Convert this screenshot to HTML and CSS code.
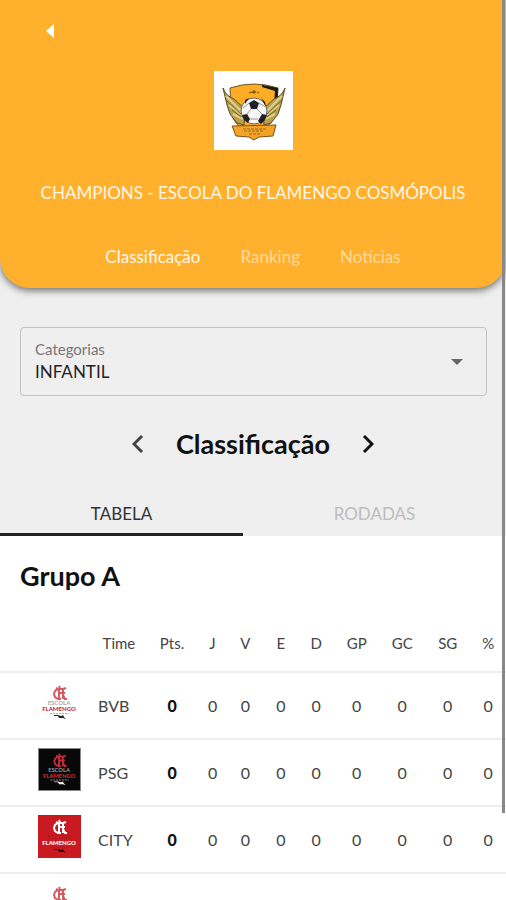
FILE: index.html
```html
<!DOCTYPE html>
<html lang="pt-BR">
<head>
<meta charset="utf-8">
<meta name="viewport" content="width=device-width, initial-scale=1">
<title>Classificação</title>
<link rel="stylesheet" href="styles.css">
</head>
<body>
<svg class="defs" aria-hidden="true">
  <symbol id="crest" viewBox="0 0 43 43">
    <path class="crest-mark" d="M21 5l1 2M25 8h-5l-3 2-1 3 1 3 3 2h2M21 8v9m-1 1h3M21 12h6M25 8v10m0-10l3-1m-3 7l2 4h2M20 8l-2-1"/>
    <text class="crest-school" x="21" y="24" text-anchor="middle">ESCOLA</text>
    <text class="crest-name" x="21" y="30" text-anchor="middle">FLAMENGO</text>
    <path class="crest-line" d="M12 32.500h19"/>
    <path class="crest-bird" d="M16 34h4l3 1 2-1 1 2 2 2-3-1-4 0-1-2h-4z"/>
  </symbol>
</svg>
<div class="screen">
  <header class="hero">
    <button class="back" type="button" aria-label="Voltar">
      <svg viewBox="0 0 8 14" width="8" height="14"><path d="M8 0v14L0 7z" fill="#fff"/></svg>
    </button>
    <svg class="badge" viewBox="0 0 79 79" role="img" aria-label="Champions">
      <path fill="#fff" d="M0 0h79v79H0z"/>
      <path d="M16 17Q40 9 64 17L63 37Q62 49 51 57L40 63 27 57Q17 49 17 38z" fill="#ffac25" stroke="#6c5526"/>
      <path d="M48 14l16 3-1 20-4 10 2-27-13-4z" fill="#171713"/>
      <path d="M9 17Q12 25 20 28L31 38 30 54 23 52 19 47 16 43 13 34z" fill="#b7a052" stroke="#594f24"/>
      <path d="M71 17Q68 25 60 28L49 38 50 54 57 52 61 47 64 43 67 34z" fill="#b7a052" stroke="#594f24"/>
      <path d="M12 25l15 15M15 34l13 10M19 43l10 5M68 25L53 40M65 34L52 44M61 43l-10 5" stroke="#e2d083" fill="none" stroke-width="2"/>
      <path d="M12 29l15 14M18 39l9 7M68 29L53 43M62 39l-9 7" stroke="#71652f" fill="none"/>
      <path d="M35 22l2-1 1 1M39 20h2v2h-2zM43 22l2-1" fill="none" stroke="#59411a"/>
      <path d="M18 55l44-1-3 11-14 1-5 3-5-3-13-1z" fill="#f5a326" stroke="#76531c"/>
      <circle cx="40" cy="40" r="13" fill="#f7f7f8" stroke="#666"/>
      <path d="M35 32l5-3 5 3-2 6h-6zM28 44l5-1 3 5-2 4-4-3zM48 43l5 1-2 5-4 4-3-3zM31 29l4-2-4 6zM47 27l4 4 1 5z" fill="#202126"/>
      <path d="M37 38l-4 5m10-5l5 5m-12 5h8M35 32l-6 5m16-5l7 4" fill="none" stroke="#999"/>
      <path d="M29 58h24M30 60h20M35 63h12" stroke="#9d6a1e" stroke-dasharray="3 1"/>
    </svg>
    <h1 class="title">CHAMPIONS - ESCOLA DO FLAMENGO COSMÓPOLIS</h1>
    <nav class="nav">
      <a class="nav-link nav-current" href="#classificacao">Classificação</a>
      <a class="nav-link" href="#ranking">Ranking</a>
      <a class="nav-link" href="#noticias">Notícias</a>
    </nav>
  </header>
  <main>
    <div class="field">
      <label class="field-label" for="categoria">Categorias</label>
      <select class="field-select" id="categoria"><option>INFANTIL</option></select>
      <svg class="field-arrow" viewBox="0 0 12 6" width="12" height="6"><path d="M0 0h12L6 6z" fill="#666"/></svg>
    </div>
    <div class="phase" id="classificacao">
      <button class="step step-previous" type="button" aria-label="Anterior">
        <svg viewBox="0 0 12 20" width="12" height="20"><path d="M10 2L2 10l8 8"/></svg>
      </button>
      <h2 class="heading">Classificação</h2>
      <button class="step" type="button" aria-label="Próxima">
        <svg viewBox="0 0 12 20" width="12" height="20"><path d="M2 2l8 8-8 8"/></svg>
      </button>
    </div>
    <div class="tabs" role="tablist">
      <button class="tab tab-current" type="button" role="tab" aria-selected="true">TABELA</button>
      <button class="tab" type="button" role="tab" aria-selected="false">RODADAS</button>
    </div>
    <section class="group">
      <h2 class="heading group-heading">Grupo A</h2>
      <table class="standings">
        <colgroup><col class="c-logo"><col class="c-team"><col class="c-points"><col class="c-played"><col class="c-small"><col class="c-small"><col class="c-small"><col class="c-goals"><col class="c-goals"><col class="c-goals"><col class="c-small"></colgroup>
        <thead><tr><th></th><th>Time</th><th>Pts.</th><th>J</th><th>V</th><th>E</th><th>D</th><th>GP</th><th>GC</th><th>SG</th><th>%</th></tr></thead>
        <tbody>
          <tr><td class="logo"><svg class="crest crest-white"><use href="#crest"/></svg></td><td class="team">BVB</td><td class="points">0</td><td>0</td><td>0</td><td>0</td><td>0</td><td>0</td><td>0</td><td>0</td><td>0</td></tr>
          <tr><td class="logo"><svg class="crest crest-black"><use href="#crest"/></svg></td><td class="team">PSG</td><td class="points">0</td><td>0</td><td>0</td><td>0</td><td>0</td><td>0</td><td>0</td><td>0</td><td>0</td></tr>
          <tr><td class="logo"><svg class="crest crest-red"><use href="#crest"/></svg></td><td class="team">CITY</td><td class="points">0</td><td>0</td><td>0</td><td>0</td><td>0</td><td>0</td><td>0</td><td>0</td><td>0</td></tr>
          <tr><td class="logo"><svg class="crest crest-white"><use href="#crest"/></svg></td><td colspan="10"></td></tr>
        </tbody>
      </table>
    </section>
  </main>
  <div class="scroll-thumb"></div>
</div>
</body>
</html>
```
FILE: styles.css
```css
* { box-sizing: border-box; }
body { margin: 0; font-family: Lato, sans-serif; font-size: 16px; color: #222; background: #efefef; }
h1, h2 { margin: 0; }
button { padding: 0; border: 0; background: none; font: inherit; color: inherit; }
.defs { display: none; }
.screen { position: relative; height: 100vh; overflow: hidden; }

.hero { display: flex; flex-direction: column; align-items: center; padding: 19px 20px; background: #ffb12d; border-radius: 0 0 30px 30px; box-shadow: 0 3px 7px rgba(0, 0, 0, .5); color: #fff7e6; }
.back { display: flex; align-items: center; align-self: flex-start; height: 24px; padding: 0 26px; }
.badge { width: 79px; height: 79px; margin-top: 28px; }
.title { margin-top: 31px; font-size: 17px; line-height: 24px; font-weight: 400; text-align: center; }
.nav { display: flex; gap: 40px; margin-top: 40px; }
.nav-link { font-size: 17px; line-height: 24px; color: #ffd996; text-decoration: none; }
.nav-current { color: #fff7e6; }

.field { position: relative; display: flex; flex-direction: column; margin: 39px 19px 0 20px; padding: 11px 14px 10px; border: 1px solid #c2c2c2; border-radius: 4px; }
.field-label { font-size: 15px; line-height: 20px; color: #777; }
.field-select { appearance: none; height: 26px; padding: 0; border: 0; background: none; font: 17px/26px Lato, sans-serif; color: #222; }
.field-arrow { position: absolute; right: 23px; top: 31px; pointer-events: none; }

.phase { display: flex; justify-content: center; align-items: center; gap: 32px; height: 40px; margin-top: 28px; }
.heading { font-size: 27px; line-height: 32px; font-weight: 700; color: #111; }
.step { display: flex; }
.step path { fill: none; stroke: #111; stroke-width: 3; }
.step-previous path { stroke: #444; }

.tabs { display: flex; height: 44px; margin-top: 28px; }
.tab { flex: 263; padding-top: 2px; border-bottom: 3px solid transparent; font-size: 17px; color: #bdbdbd; }
.tab-current { flex: 243; border-color: #222; color: #333; }

.group { padding-top: 24px; background: #fff; }
.group-heading { padding-left: 20px; }
.standings { width: 100%; margin-top: 22px; border-collapse: collapse; table-layout: fixed; }
.c-logo { width: 18%; }
.c-team { width: 11%; }
.c-points { width: 10%; }
.c-played { width: 6%; }
.c-small { width: 7%; }
.c-goals { width: 9%; }
.standings th { height: 58px; padding: 0; border-bottom: 2px solid #eee; font-size: 15px; font-weight: 400; color: #444; }
.standings td { height: 67px; padding: 0; border-bottom: 2px solid #eee; text-align: center; color: #444; }
.standings .logo { padding: 0 0 6px 38px; }
.standings .team { padding-left: 7px; text-align: left; }
.standings .points { font-weight: 900; color: #111; }

.crest { display: block; width: 43px; height: 43px; fill: #aaa; }
.crest-mark { fill: none; stroke: var(--mark); stroke-width: 2; }
.crest-school { font: 700 6px Lato, sans-serif; fill: var(--school); }
.crest-name { font: 900 6px Lato, sans-serif; fill: var(--name); }
.crest-line { stroke: var(--school); stroke-dasharray: 2 1; }
.crest-bird { fill: var(--bird); }
.crest-white { --mark: #d65a60; --school: #aaa; --name: #c62f38; --bird: #222; }
.crest-black { --mark: #c42d35; --school: #999; --name: #d02832; --bird: #eee; background: #080808; border: 1px solid #888; }
.crest-red { --mark: #fff; --school: #b5161f; --name: #fff; --bird: #35080b; background: #c91a22; }

.scroll-thumb { position: absolute; top: 0; right: 1px; width: 3px; height: 813px; background: #888; }
```
